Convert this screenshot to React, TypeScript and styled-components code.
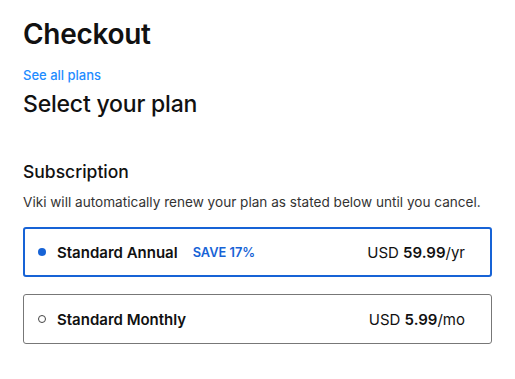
import React from "react";
import styled, { createGlobalStyle } from "styled-components";

const Global = createGlobalStyle`
  html, body { margin: 0; padding: 0; background: #fff; }
  body { font-family: Inter, "Noto Sans", sans-serif; color: #111; -webkit-font-smoothing: antialiased; }
`;

const Page = styled.div`
  width: 469px;
  padding: 16px 23px 0 23px;
  display: flex;
  flex-direction: column;
`;

const Title = styled.h1`
  margin: 0;
  font-size: 28px;
  line-height: 36px;
  font-weight: 600;
  letter-spacing: -0.3px;
`;

const PlansLink = styled.a`
  margin-top: 14px;
  font-size: 13px;
  line-height: 18px;
  font-weight: 500;
  color: #1e8cff;
  text-decoration: none;
`;

const Heading = styled.h2`
  margin: 5px 0 0;
  font-size: 23px;
  line-height: 30px;
  font-weight: 500;
  letter-spacing: -0.2px;
`;

const SubHeading = styled.h3`
  margin: 41px 0 0;
  font-size: 17.5px;
  line-height: 24px;
  font-weight: 500;
`;

const Note = styled.p`
  margin: 9px 0 0;
  font-size: 13.6px;
  line-height: 18px;
  color: #333;
`;

const Options = styled.div`
  display: flex;
  flex-direction: column;
  gap: 17px;
  margin-top: 16px;
`;

const Card = styled.label<{ $selected?: boolean }>`
  box-sizing: border-box;
  height: 50px;
  display: flex;
  align-items: center;
  border-radius: 3px;
  border: ${(p) => (p.$selected ? "2px solid #1763d6" : "1px solid #777")};
  padding-left: ${(p) => (p.$selected ? "13px" : "14px")};
  padding-right: ${(p) => (p.$selected ? "25px" : "26px")};
`;

const Radio = styled.span<{ $selected?: boolean }>`
  box-sizing: border-box;
  width: 8px;
  height: 8px;
  border-radius: 50%;
  flex: none;
  background: ${(p) => (p.$selected ? "#1763d6" : "#fff")};
  border: ${(p) => (p.$selected ? "none" : "1px solid #444")};
`;

const PlanName = styled.span`
  margin-left: 11px;
  font-size: 15px;
  font-weight: 600;
`;

const Save = styled.span`
  margin-left: 15px;
  font-size: 12.8px;
  font-weight: 600;
  color: #1763d6;
`;

const Price = styled.span`
  margin-left: auto;
  font-size: 15px;
  color: #111;
  b { font-weight: 600; }
`;

export default function App() {
  return (
    <>
      <Global />
      <Page>
        <Title>Checkout</Title>
        <PlansLink href="#">See all plans</PlansLink>
        <Heading>Select your plan</Heading>
        <SubHeading>Subscription</SubHeading>
        <Note>Viki will automatically renew your plan as stated below until you cancel.</Note>
        <Options>
          <Card $selected>
            <Radio $selected />
            <PlanName>Standard Annual</PlanName>
            <Save>SAVE 17%</Save>
            <Price>USD <b>59.99</b>/yr</Price>
          </Card>
          <Card>
            <Radio />
            <PlanName>Standard Monthly</PlanName>
            <Price>USD <b>5.99</b>/mo</Price>
          </Card>
        </Options>
      </Page>
    </>
  );
}
